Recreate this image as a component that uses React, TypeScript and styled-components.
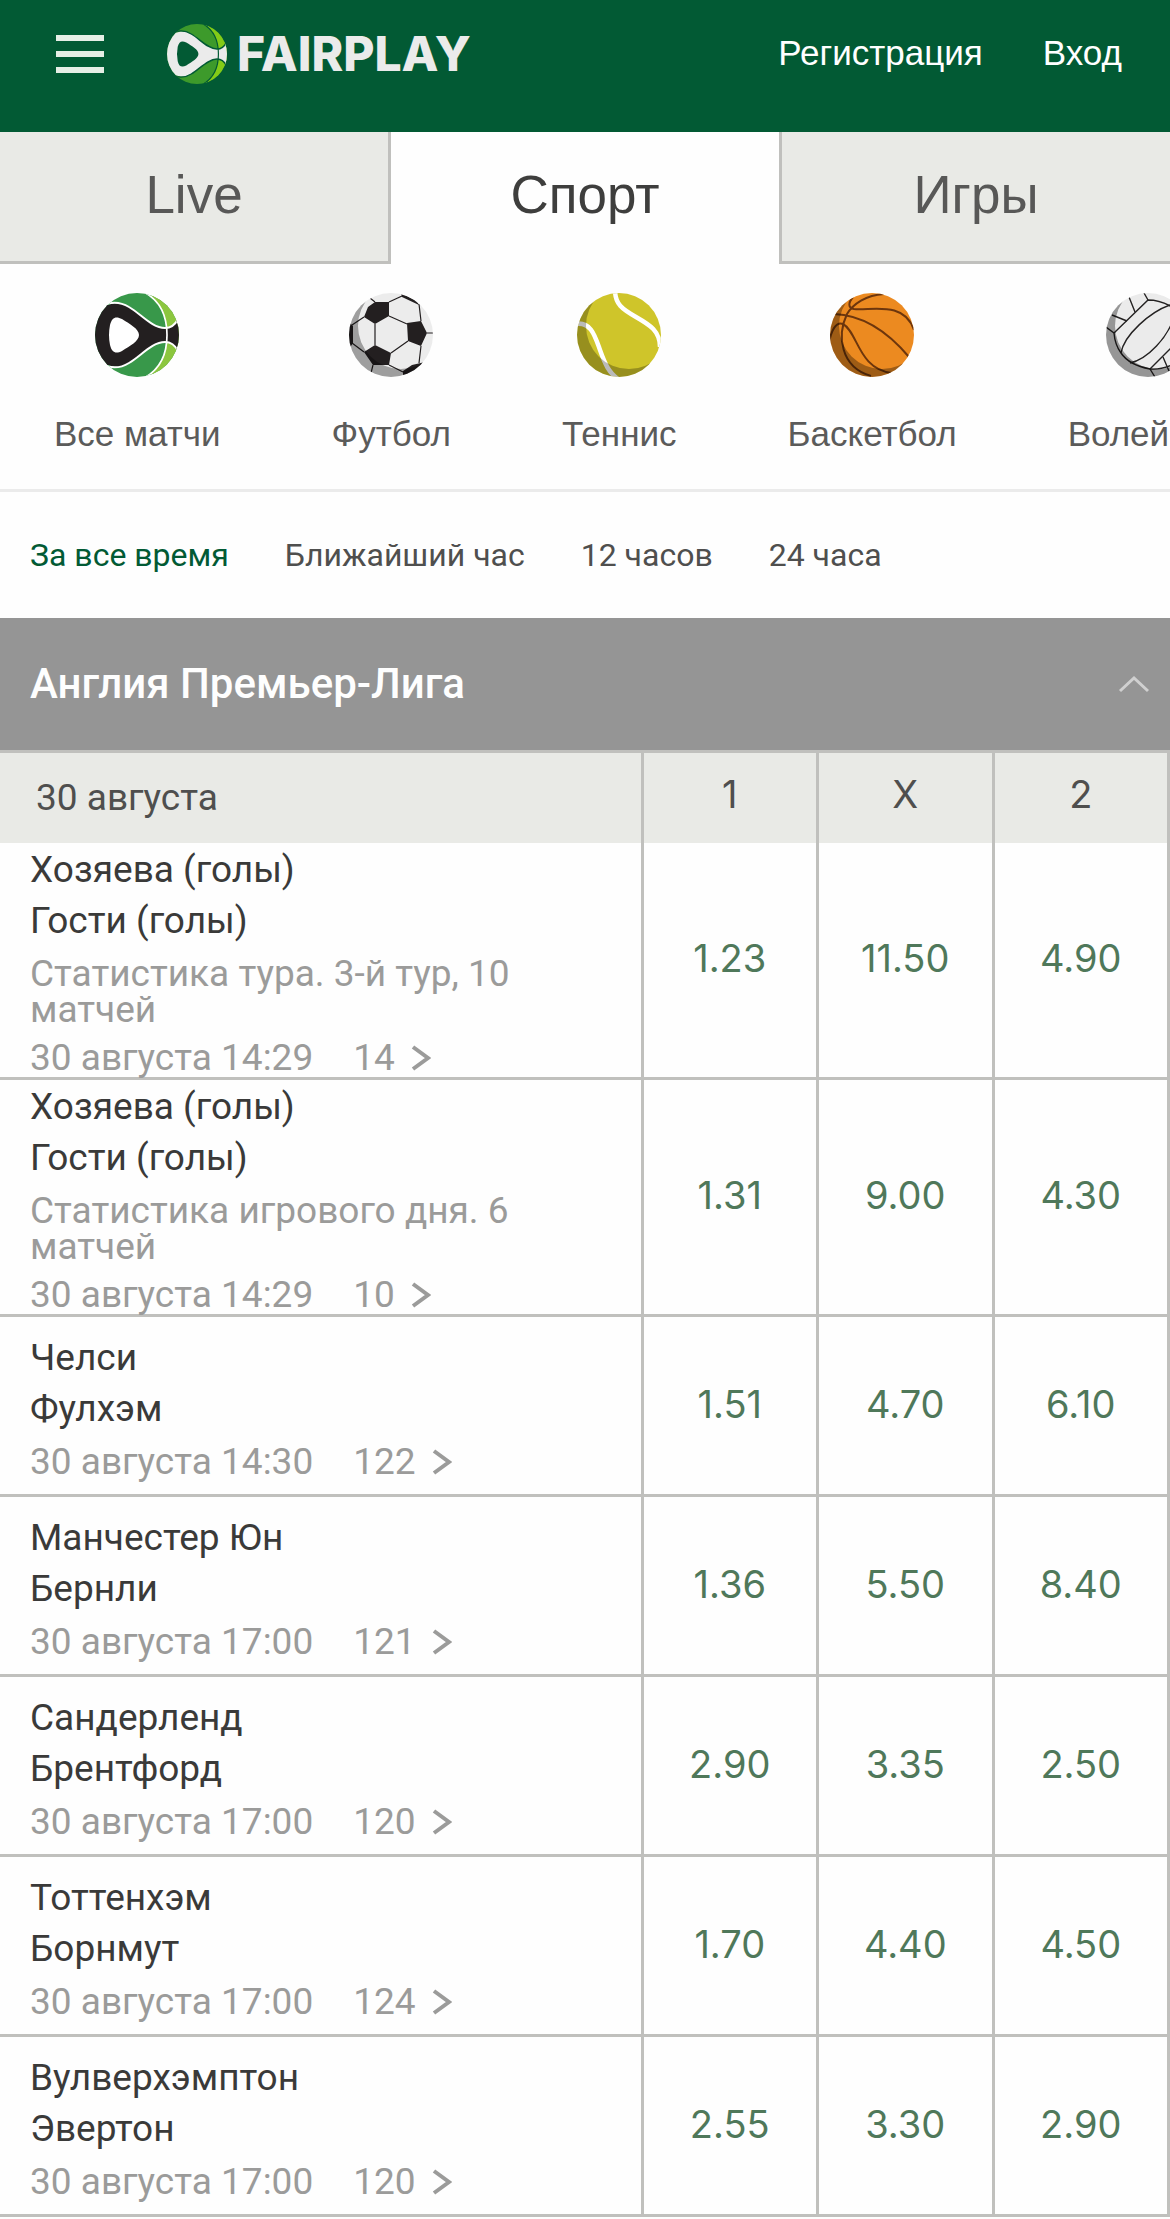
import React from 'react';
import styled, { createGlobalStyle } from 'styled-components';

const helvetica = '"Liberation Sans", Arial, sans-serif';
const inter = 'Inter, Roboto, sans-serif';
const roboto = 'Roboto, Inter, sans-serif';

const GlobalStyle = createGlobalStyle`
  * { box-sizing: border-box; }
  body { margin: 0; background: #fefefe; font-family: ${roboto}; color: #4f4f4e; }
  button { margin: 0; padding: 0; border: 0; background: none; font: inherit; color: inherit; cursor: pointer; }
  a { color: inherit; text-decoration: none; }
  svg { display: block; flex: none; }
`;

const Header = styled.header`
  height: 132px;
  padding: 0 48px 24px 56px;
  display: flex;
  align-items: center;
  background: #025a34;
  font-family: ${helvetica};
`;

const MenuButton = styled.button`
  width: 48px;
  display: flex;
  flex-direction: column;
  gap: 10px;
`;

const MenuBar = styled.span`
  height: 6px;
  background: #e6efe6;
`;

const Brand = styled.a`
  margin-left: 63px;
  display: flex;
  align-items: center;
  gap: 10px;
  font: 800 48px/60px ${inter};
  color: #ebebeb;
`;

const Account = styled.nav`
  margin-left: auto;
  padding-bottom: 2px;
  display: flex;
  gap: 60px;
  font-size: 35px;
  line-height: 40px;
  color: #fff;
`;

const Tabs = styled.nav`
  display: flex;
  font-family: ${helvetica};
`;

const Tab = styled.button<{ $state: 'left' | 'active' | 'right' }>`
  flex: 1 1 0;
  box-sizing: content-box;
  height: 125px;
  padding-bottom: 4px;
  font-size: 53px;
  line-height: 60px;
  color: ${(p) => (p.$state === 'active' ? '#3e3e3d' : '#585857')};
  background: ${(p) => (p.$state === 'active' ? '#fefefe' : '#e9eae6')};
  border: 0 solid ${(p) => (p.$state === 'active' ? '#fefefe' : '#c0c0bd')};
  border-bottom-width: 3px;
  border-right-width: ${(p) => (p.$state === 'left' ? 3 : 0)}px;
  border-left-width: ${(p) => (p.$state === 'right' ? 3 : 0)}px;
`;

const Sports = styled.nav`
  display: flex;
  gap: 111px;
  padding: 29px 0 35px 54px;
  overflow: hidden;
  border-bottom: 3px solid #ebebeb;
  font-family: ${helvetica};
`;

const Sport = styled.a`
  flex: none;
  display: flex;
  flex-direction: column;
  align-items: center;
  gap: 37px;
  font-size: 35px;
  line-height: 40px;
  color: #5b5b5a;
`;

const Periods = styled.nav`
  display: flex;
  align-items: center;
  gap: 56px;
  height: 126px;
  padding: 0 30px;
  font-size: 32px;
  line-height: 40px;
`;

const Period = styled.button<{ $active?: boolean }>`
  color: ${(p) => (p.$active ? '#025a34' : '#4f4f4e')};
  white-space: nowrap;
`;

const League = styled.button`
  width: 100%;
  height: 132px;
  padding: 0 20px 0 30px;
  display: flex;
  align-items: center;
  justify-content: space-between;
  background: #959595;
  color: #fefefe;
  font-size: 42px;
  font-weight: 500;
  line-height: 50px;
`;

const Odds = styled.table`
  width: 100%;
  table-layout: fixed;
  border-collapse: separate;
  border-spacing: 0;
  border-top: 3px solid #c0c0bd;
  font-size: 37px;
`;

const DateHead = styled.th`
  width: 55%;
  height: 90px;
  padding: 0 36px 2px;
  text-align: left;
  font-weight: 400;
  background: #e9eae6;
  border-right: 3px solid #c0c0bd;
`;

const OutcomeHead = styled.th`
  padding: 0 0 8px;
  font-family: ${inter};
  font-size: 38px;
  font-weight: 400;
  background: #e9eae6;
  border-right: 3px solid #c0c0bd;
`;

const MatchCell = styled.td`
  height: 180px;
  padding: 1px 90px 0 30px;
  border: 0 solid #c0c0bd;
  border-width: 0 3px 3px 0;
`;

const Team = styled.div`
  line-height: 51px;
  color: #3a3a39;
`;

const Note = styled.div`
  padding: 10px 0 2px;
  line-height: 36px;
  color: #9b9b9a;
`;

const Meta = styled.a`
  margin-top: 10px;
  padding-bottom: 1px;
  display: flex;
  align-items: center;
  line-height: 36px;
  color: #9b9b9a;
  white-space: nowrap;
`;

const Count = styled.span`
  margin: 0 16px 0 40px;
`;

const OddCell = styled.td`
  padding: 0;
  border: 0 solid #c0c0bd;
  border-width: 0 3px 3px 0;
  text-align: center;
`;

const OddButton = styled.button`
  width: 100%;
  padding: 20px 0 24px;
  font-family: ${inter};
  font-size: 38px;
  line-height: 46px;
  color: #4f785a;
`;

type MarkProps = { id: string; size: number; body: string; line: string; dark: string; light: string };

function BallMark({ id, size, body, line, dark, light }: MarkProps) {
  return (
    <svg width={size} height={size} viewBox="0 0 84 84" aria-hidden="true">
      <clipPath id={id}>
        <circle cx="42" cy="42" r="42" />
      </clipPath>
      <g clipPath={`url(#${id})`}>
        <rect width="84" height="84" fill={dark} />
        <path d="M49-2C64 6 72 22 72 42S64 78 49 86H90V-2Z" fill={light} />
        <path
          d="M-4 42V12H14C18 10 26 9 34 14C46 21 57 35 70 35C76 35 80 32 82 27L92 20V64L82 57C80 52 76 49 70 49C57 49 46 63 34 70C26 75 18 74 14 72H-4Z"
          fill={body}
        />
        <path d="M8 12C18 8 26 9 34 14C46 21 57 35 70 35C76 35 80 32 83 26" fill="none" stroke={line} strokeWidth="2" />
        <path d="M8 72C18 76 26 75 34 70C46 63 57 49 70 49C76 49 80 52 83 58" fill="none" stroke={line} strokeWidth="2" />
        <path d="M49-1C64 7 72 22 72 42S64 77 49 85" fill="none" stroke={line} strokeWidth="1.7" />
        <path d="M15 32C17 24 21 23 27 26C35 31 44 36 44 42S35 53 27 58C21 61 17 60 15 52Q13 42 15 32Z" fill={line} />
      </g>
    </svg>
  );
}

const shade = 'M-2-2H86V86H-2ZM95 33A43 43 0 1 0 9 33A43 43 0 1 0 95 33Z';

function Ball({ id, fill, shadow = 0.33, children }: { id: string; fill: string; shadow?: number; children: React.ReactNode }) {
  return (
    <svg width="84" height="84" viewBox="0 0 84 84" aria-hidden="true">
      <clipPath id={id}>
        <circle cx="42" cy="42" r="42" />
      </clipPath>
      <clipPath id={`${id}-shade`}>
        <path d="M0 0V84H84V60L52 33L24 0Z" />
      </clipPath>
      <g clipPath={`url(#${id})`}>
        <rect width="84" height="84" fill={fill} />
        {children}
        <path d={shade} fillRule="evenodd" fill="#000" fillOpacity={shadow} clipPath={`url(#${id}-shade)`} />
      </g>
    </svg>
  );
}

const Football = () => (
  <Ball id="football" fill="#ececec">
    <path
      d="M26 9L21 5M40 9L53 3M40 23L58 31M26 31V52M15 24L3 32M70 11L72 28M78 40H84M72 53L70 70M59 48L42 60M40 72L54 79M24 72L22 80M15 59L3 50"
      stroke="#231f20"
      strokeWidth="1.2"
    />
    <path
      d="M26 9H40V23L26 31L15 24L19 14ZM58 30L72 28L78 40L72 53L59 48ZM26 52L42 60L40 72H24L15 59ZM-1 28L4 33V50L0 56ZM52 0L68 8L70 12L53 4ZM76 69L63 72L54 78V84L72 80Z"
      fill="#231f20"
    />
  </Ball>
);

const Tennis = () => (
  <Ball id="tennis" fill="#cfc52a" shadow={0.27}>
    <path d="M38-3C38 11 45 16 59 24C73 32 83 38 83 54" fill="none" stroke="#fff" strokeWidth="4.5" />
    <path d="M-2 31C14 28 18 43 23 57C28 71 32 80 41 86" fill="none" stroke="#fff" strokeWidth="4.5" />
  </Ball>
);

const Basketball = () => (
  <Ball id="basketball" fill="#ec8a20">
    <g fill="none" stroke="#6d360d" strokeWidth="2">
      <path d="M4 21C32 22 58 39 79 64" />
      <path d="M54 1C36 2 23 11 17 21C7 42 10 74 41 83" />
      <path d="M23 4C18 10 18 15 24 16C40 18 74 7 84 37" />
      <path d="M-1 50C1 38 6 28 13 31C28 39 28 76 62 80" />
    </g>
  </Ball>
);

const Volleyball = () => (
  <Ball id="volleyball" fill="#ebebeb" shadow={0.36}>
    <g fill="none" stroke="#242222" strokeWidth="1.4">
      <path d="M8 40L42 7Q54 7 66 14Q76 23 80 42" />
      <path d="M38 0L42 7M23 4L29 19M6 22L21 28M0 34L8 40" />
      <path d="M8 40Q9 52 15 60Q23 72 44 76Q54 77 66 72" />
      <path d="M15 60C18 42 44 19 64 12M24 70C42 66 62 44 68 24M44 76L78 42" />
      <path d="M44 76L49 84M57 64L63 78" />
    </g>
  </Ball>
);

const sports = [
  {
    name: 'Все матчи',
    icon: <BallMark id="all" size={84} body="#231f20" line="#fff" dark="#38984a" light="#8cc63f" />,
  },
  { name: 'Футбол', icon: <Football /> },
  { name: 'Теннис', icon: <Tennis /> },
  { name: 'Баскетбол', icon: <Basketball /> },
  { name: 'Волейбол', icon: <Volleyball /> },
];

const periods = ['За все время', 'Ближайший час', '12 часов', '24 часа'];

type Match = { home: string; away: string; note?: string; time: string; count: number; odds: string[] };

const matches: Match[] = [
  { home: 'Хозяева (голы)', away: 'Гости (голы)', note: 'Статистика тура. 3-й тур, 10 матчей', time: '14:29', count: 14, odds: ['1.23', '11.50', '4.90'] },
  { home: 'Хозяева (голы)', away: 'Гости (голы)', note: 'Статистика игрового дня. 6 матчей', time: '14:29', count: 10, odds: ['1.31', '9.00', '4.30'] },
  { home: 'Челси', away: 'Фулхэм', time: '14:30', count: 122, odds: ['1.51', '4.70', '6.10'] },
  { home: 'Манчестер Юн', away: 'Бернли', time: '17:00', count: 121, odds: ['1.36', '5.50', '8.40'] },
  { home: 'Сандерленд', away: 'Брентфорд', time: '17:00', count: 120, odds: ['2.90', '3.35', '2.50'] },
  { home: 'Тоттенхэм', away: 'Борнмут', time: '17:00', count: 124, odds: ['1.70', '4.40', '4.50'] },
  { home: 'Вулверхэмптон', away: 'Эвертон', time: '17:00', count: 120, odds: ['2.55', '3.30', '2.90'] },
];

export default function App() {
  return (
    <>
      <GlobalStyle />
      <Header>
        <MenuButton aria-label="Меню">
          <MenuBar />
          <MenuBar />
          <MenuBar />
        </MenuButton>
        <Brand href="#">
          <BallMark id="brand" size={60} body="#ebebeb" line="#025a34" dark="#3d9a2b" light="#83cb17" />
          FAIRPLAY
        </Brand>
        <Account>
          <a href="#register">Регистрация</a>
          <a href="#login">Вход</a>
        </Account>
      </Header>
      <Tabs>
        <Tab $state="left">Live</Tab>
        <Tab $state="active">Спорт</Tab>
        <Tab $state="right">Игры</Tab>
      </Tabs>
      <main>
        <Sports>
          {sports.map((s) => (
            <Sport key={s.name} href="#">
              {s.icon}
              {s.name}
            </Sport>
          ))}
        </Sports>
        <Periods>
          {periods.map((p, i) => (
            <Period key={p} $active={i === 0}>
              {p}
            </Period>
          ))}
        </Periods>
        <League aria-expanded="true">
          Англия Премьер-Лига
          <svg width="32" height="18" viewBox="0 0 32 18" aria-hidden="true">
            <path d="M2 16L16 3L30 16" fill="none" stroke="#d0d0d0" strokeWidth="3" />
          </svg>
        </League>
        <Odds>
          <thead>
            <tr>
              <DateHead scope="col">30 августа</DateHead>
              <OutcomeHead scope="col">1</OutcomeHead>
              <OutcomeHead scope="col">X</OutcomeHead>
              <OutcomeHead scope="col">2</OutcomeHead>
            </tr>
          </thead>
          <tbody>
            {matches.map((m) => (
              <tr key={m.home + m.count}>
                <MatchCell>
                  <Team>{m.home}</Team>
                  <Team>{m.away}</Team>
                  {m.note && <Note>{m.note}</Note>}
                  <Meta href="#">
                    30 августа {m.time}
                    <Count>{m.count}</Count>
                    <svg width="20" height="26" viewBox="0 0 20 26" aria-hidden="true">
                      <path d="M2 2L17 13L2 24" fill="none" stroke="#9b9b9a" strokeWidth="4" />
                    </svg>
                  </Meta>
                </MatchCell>
                {m.odds.map((o, i) => (
                  <OddCell key={i}>
                    <OddButton>{o}</OddButton>
                  </OddCell>
                ))}
              </tr>
            ))}
          </tbody>
        </Odds>
      </main>
    </>
  );
}
